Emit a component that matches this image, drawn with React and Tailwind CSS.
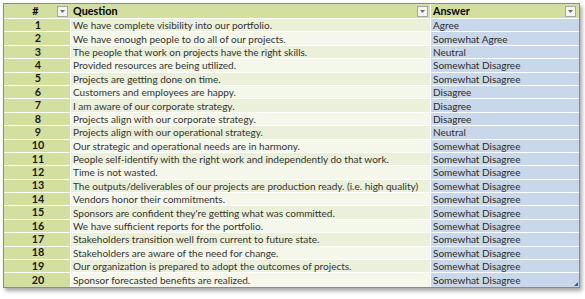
import React from 'react';

const rows = [
  ['We have complete visibility into our portfolio.', 'Agree'],
  ['We have enough people to do all of our projects.', 'Somewhat Agree'],
  ['The people that work on projects have the right skills.', 'Neutral'],
  ['Provided resources are being utilized.', 'Somewhat Disagree'],
  ['Projects are getting done on time.', 'Somewhat Disagree'],
  ['Customers and employees are happy.', 'Disagree'],
  ['I am aware of our corporate strategy.', 'Disagree'],
  ['Projects align with our corporate strategy.', 'Disagree'],
  ['Projects align with our operational strategy.', 'Neutral'],
  ['Our strategic and operational needs are in harmony.', 'Somewhat Disagree'],
  ['People self-identify with the right work and independently do that work.', 'Somewhat Disagree'],
  ['Time is not wasted.', 'Somewhat Disagree'],
  ['The outputs/deliverables of our projects are production ready. (i.e. high quality)', 'Somewhat Disagree'],
  ['Vendors honor their commitments.', 'Somewhat Disagree'],
  ["Sponsors are confident they're getting what was committed.", 'Somewhat Disagree'],
  ['We have sufficient reports for the portfolio.', 'Somewhat Disagree'],
  ['Stakeholders transition well from current to future state.', 'Somewhat Disagree'],
  ['Stakeholders are aware of the need for change.', 'Somewhat Disagree'],
  ['Our organization is prepared to adopt the outcomes of projects.', 'Somewhat Disagree'],
  ['Sponsor forecasted benefits are realized.', 'Somewhat Disagree'],
];

const Drop = () => (
  <span className="w-[11px] h-[11px] border border-[#a6a6a6] bg-[#f4f4f4] flex items-center justify-center shrink-0">
    <svg width="5" height="3" viewBox="0 0 5 3">
      <path d="M0 0h5L2.5 3z" fill="#6b6b6b" />
    </svg>
  </span>
);

export default function App() {
  return (
    <div className="w-[585px] h-[299px] bg-white p-[3px]" style={{ fontFamily: 'Lato, "Open Sans", sans-serif' }}>
      <div className="w-[577px] border border-[#8a8a8a] shadow-[2px_3px_4px_rgba(0,0,0,0.35)] bg-white text-[10px] leading-none">
        <div className="grid grid-cols-[66px_360px_1fr] h-[15px] bg-[#d3df9f] border-b border-white font-bold text-black text-[10.8px]">
          <div className="flex items-center pl-[2px] pr-[2px]">
            <span className="flex-1 text-center pl-[8px]">#</span>
            <Drop />
          </div>
          <div className="flex items-center pl-[2px] pr-[2px] border-l border-[#d3df9f]">
            <span className="flex-1">Question</span>
            <Drop />
          </div>
          <div className="flex items-center pl-[2px] pr-[3px] border-l border-white">
            <span className="flex-1">Answer</span>
            <Drop />
          </div>
        </div>
        {rows.map(([q, a], i) => (
          <div
            key={i}
            className="grid grid-cols-[66px_360px_1fr] h-[13.4px] border-b border-white last:border-b-0"
          >
            <div className="bg-[#d3df9f] flex items-center justify-center font-bold text-[#1a1a1a] pl-[2px] text-[10.8px]">{i + 1}</div>
            <div className={`${i % 2 === 0 ? 'bg-[#ebf0da]' : 'bg-[#f5f7ea]'} flex items-center pl-[2px] text-[#333] whitespace-nowrap overflow-hidden border-l border-white`}>{q}</div>
            <div className="relative bg-[#c8d8ea] flex items-center pl-[2px] text-[#2b2b2b] border-l border-white">
              {a}
              {i === rows.length - 1 && (
                <svg className="absolute right-[1px] bottom-[1px]" width="4" height="4" viewBox="0 0 4 4">
                  <path d="M4 0v4H0z" fill="#2f5b9a" />
                </svg>
              )}
            </div>
          </div>
        ))}
      </div>
    </div>
  );
}
